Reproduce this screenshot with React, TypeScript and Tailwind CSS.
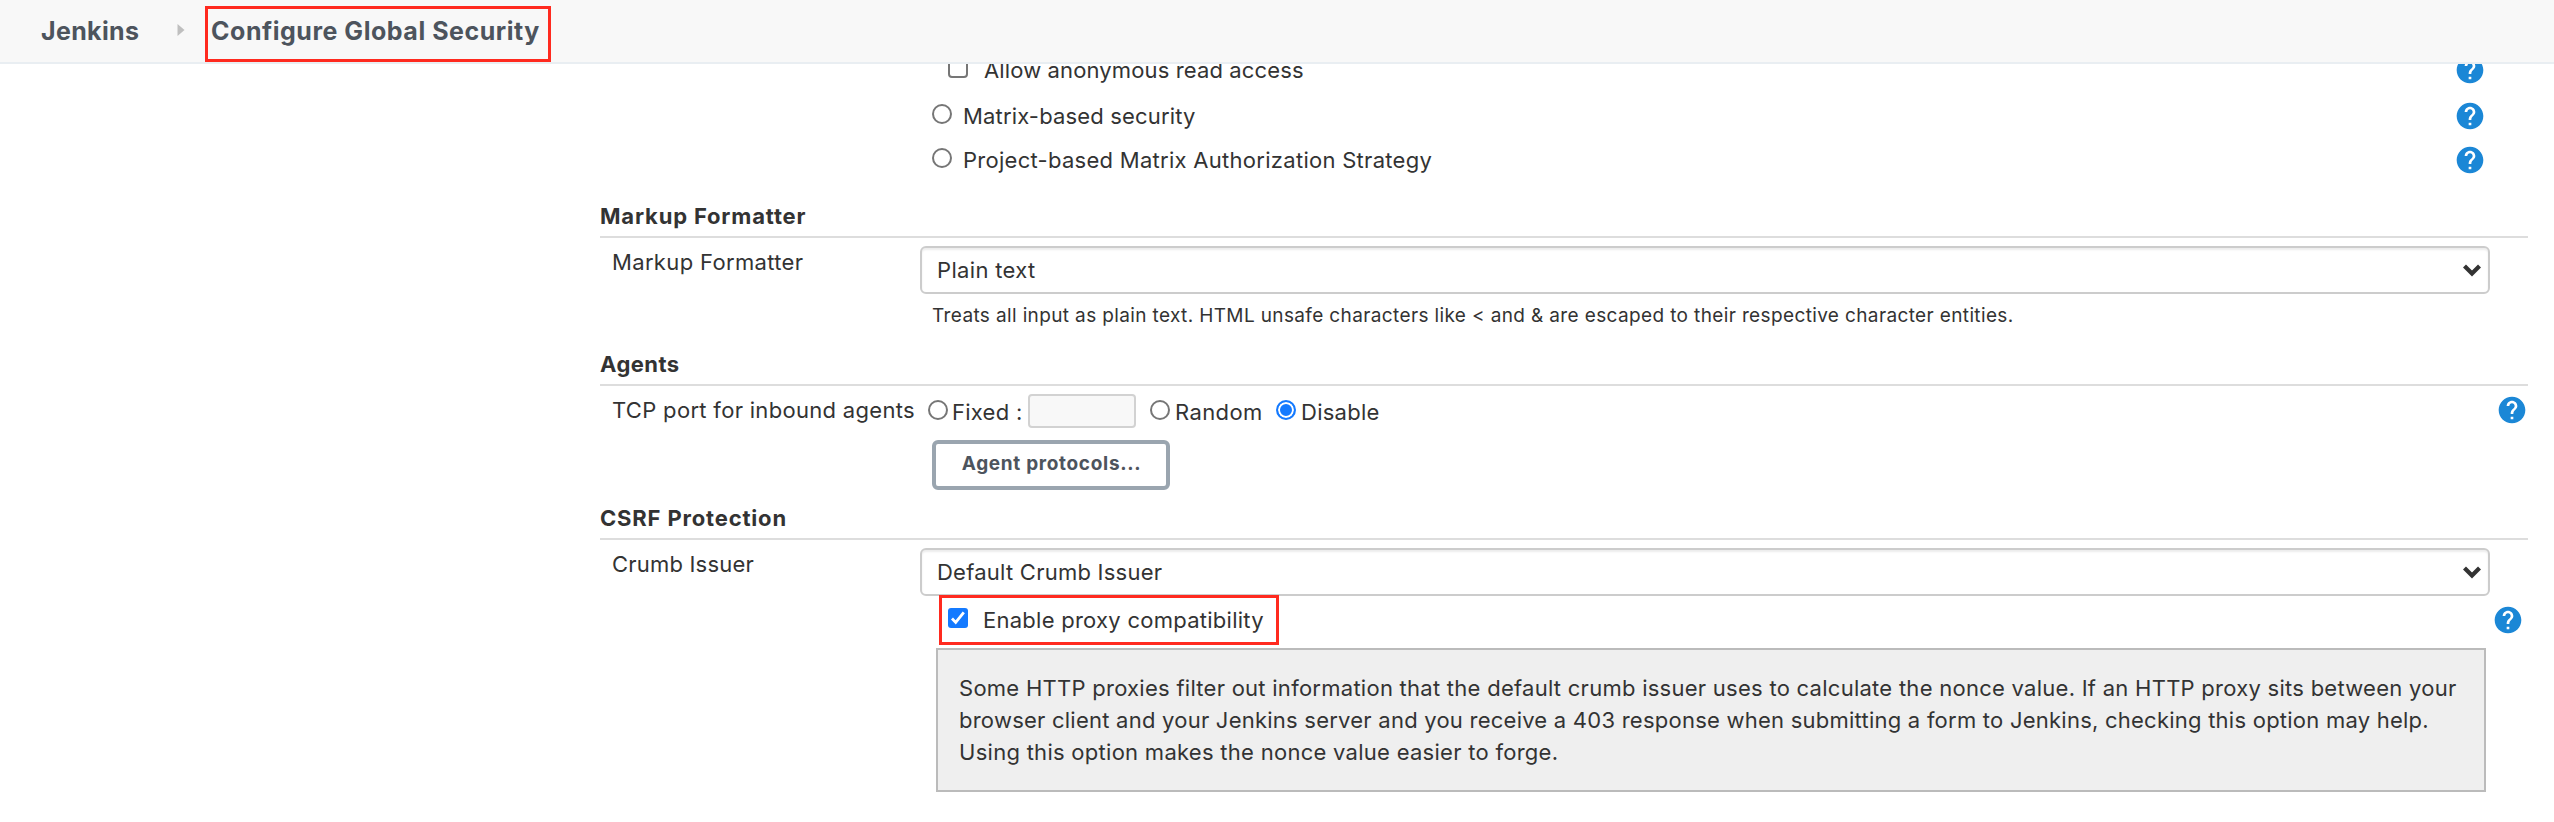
import type { ReactNode } from 'react';

function HelpIcon() {
  return (
    <svg viewBox="0 0 24 24" className="size-8 shrink-0" fill="#1b87d6">
      <path d="M12 2C6.48 2 2 6.48 2 12s4.48 10 10 10 10-4.48 10-10S17.52 2 12 2zm1 17h-2v-2h2v2zm2.07-7.75l-.9.92C13.45 12.9 13 13.5 13 15h-2v-.5c0-1.1.45-2.1 1.17-2.83l1.24-1.26c.37-.36.59-.86.59-1.41 0-1.1-.9-2-2-2s-2 .9-2 2H8c0-2.21 1.79-4 4-4s4 1.79 4 4c0 .88-.36 1.68-.93 2.25z" />
    </svg>
  );
}

function Radio({ checked = false }: { checked?: boolean }) {
  return (
    <input
      type="radio"
      name={checked ? 'selected' : undefined}
      defaultChecked={checked}
      className="size-5 shrink-0 appearance-none rounded-full border-2 border-[#767676] bg-white checked:border-[#147aff] checked:bg-[#147aff] checked:shadow-[inset_0_0_0_2px_white]"
    />
  );
}

function CheckMark() {
  return (
    <svg viewBox="0 0 20 20" className="size-5 shrink-0">
      <rect width="20" height="20" rx="3" fill="#147aff" />
      <path d="M4 10.6 7.7 14.4 15.8 4.4" fill="none" stroke="#fff" strokeWidth="2.8" />
    </svg>
  );
}

function SectionHeading({ children }: { children: ReactNode }) {
  return <h2 className="border-b-2 border-[#dddddd] pb-1 font-bold">{children}</h2>;
}

function Select({ children }: { children: ReactNode }) {
  return (
    <div className="flex h-12 w-[1570px] items-center justify-between rounded-[6px] border-2 border-[#cccccc] bg-white pr-[7px] pl-[15px] shadow-[inset_0_2px_2px_rgba(0,0,0,0.075)]">
      {children}
      <svg viewBox="0 0 18 13" className="h-[13px] w-[18px]">
        <path d="M1.5 2 9 9.5 16.5 2" fill="none" stroke="#333" strokeWidth="4.2" />
      </svg>
    </div>
  );
}

function StrategyRow({ label, className }: { label: ReactNode; className: string }) {
  return (
    <div className={`flex h-8 justify-between pr-[42px] pl-[332px] ${className}`}>
      <label className="flex">
        <span className="flex pt-1">
          <Radio />
        </span>
        {label}
      </label>
      <HelpIcon />
    </div>
  );
}

export default function App() {
  return (
    <div className="h-[822px] overflow-hidden bg-white font-['Inter',sans-serif] text-[22px] leading-8 tracking-[0.26px] text-[#333333]">
      <header className="relative z-10 flex h-16 items-start border-b-2 border-[#e9eef2] bg-[#f8f8f8] text-[25px] font-bold text-[#4d545d]">
        <span className="w-[177px] pt-[15px] pl-[41px] tracking-[0.35px]">Jenkins</span>
        <svg viewBox="0 0 8 12" className="mt-6 h-3 w-2">
          <path d="M0.5 0 7.5 6 0.5 12z" fill="#bfbfbf" />
        </svg>
        <span className="mt-1.5 ml-5 h-14 w-[346px] border-3 border-[#ff2a1f] pt-1.5 pl-[3px] tracking-[0.53px] whitespace-nowrap">
          Configure Global Security
        </span>
      </header>

      <main className="-mt-2.5 mr-[26px] ml-[600px]">
        <div className="flex h-8 justify-between pr-[42px] pl-[348px]">
          <label className="flex gap-4">
            <input type="checkbox" className="mt-1 size-5 appearance-none rounded-[4px] border-2 border-[#767676] bg-white" />
            <span className="tracking-[0.13px]">Allow anonymous read access</span>
          </label>
          <HelpIcon />
        </div>
        <StrategyRow className="mt-3.5" label={<span className="pl-[11px] tracking-[0.16px]">Matrix-based security</span>} />
        <StrategyRow
          className="mt-3"
          label={<span className="pl-[11px] tracking-[0.28px]">Project-based Matrix Authorization Strategy</span>}
        />

        <section className="mt-6">
          <SectionHeading>
            <span className="tracking-[0.83px]">Markup Formatter</span>
          </SectionHeading>
          <div className="mt-2 flex">
            <span className="w-[320px] pl-3 tracking-[0.34px]">Markup Formatter</span>
            <Select>
              <span className="tracking-[0.33px]">Plain text</span>
            </Select>
          </div>
          <p className="mt-1.5 pl-[332px] text-[19px] tracking-[0.37px]">
            Treats all input as plain text. HTML unsafe characters like &lt; and &amp; are escaped to their respective character
            entities.
          </p>
        </section>

        <section className="mt-4">
          <SectionHeading>
            <span className="tracking-[0.46px]">Agents</span>
          </SectionHeading>
          <div className="mt-2 flex h-[34px]">
            <span className="w-[328px] pl-[12px] tracking-[0.31px]">TCP port for inbound agents</span>
            <label className="flex w-[100px] pt-[6px]">
              <Radio />
              <span className="-mt-1 pl-1">Fixed :</span>
            </label>
            <input type="text" disabled className="h-[34px] w-[108px] rounded-[4px] border-2 border-[#d2d2d2] bg-[#f8f8f8]" />
            <label className="ml-3.5 flex w-[126px] pt-[6px]">
              <Radio />
              <span className="-mt-1 pl-[5px] tracking-[0.4px]">Random</span>
            </label>
            <label className="flex pt-[6px]">
              <Radio checked />
              <span className="-mt-1 pl-[5px]">Disable</span>
            </label>
            <span className="ml-auto">
              <HelpIcon />
            </span>
          </div>
          <button className="mt-3 ml-[332px] flex h-[50px] w-[238px] justify-center rounded-[6px] border-4 border-[#9aa5af] bg-white pl-px text-[19px] leading-10 font-bold tracking-[0.68px] text-[#4d545d]">
            Agent protocols...
          </button>
        </section>

        <section className="mt-3">
          <SectionHeading>
            <span className="tracking-[0.83px]">CSRF Protection</span>
          </SectionHeading>
          <div className="mt-2 flex">
            <span className="w-[320px] pl-3 tracking-[0.2px]">Crumb Issuer</span>
            <Select>
              <span className="tracking-[0.24px]">Default Crumb Issuer</span>
            </Select>
          </div>
          <div className="relative -mt-px flex justify-between pr-1 pl-[339px]">
            <label className="flex h-[50px] w-[340px] border-3 border-[#ff2a1f] pl-1.5">
              <span className="pt-2.5">
                <CheckMark />
              </span>
              <span className="pt-1.5 pl-[15px]">Enable proxy compatibility</span>
            </label>
            <span className="pt-[9px]">
              <HelpIcon />
            </span>
          </div>
          <div className="mt-[3px] ml-[336px] h-36 w-[1550px] border-2 border-[#bbbbbb] bg-[#efefef] pt-[22px] pl-[21px] whitespace-nowrap">
            <p className="tracking-[0.264px]">
              Some HTTP proxies filter out information that the default crumb issuer uses to calculate the nonce value. If an HTTP
              proxy sits between your
            </p>
            <p className="tracking-[0.238px]">
              browser client and your Jenkins server and you receive a 403 response when submitting a form to Jenkins, checking this
              option may help.
            </p>
            <p className="tracking-[0.275px]">Using this option makes the nonce value easier to forge.</p>
          </div>
        </section>
      </main>
    </div>
  );
}
